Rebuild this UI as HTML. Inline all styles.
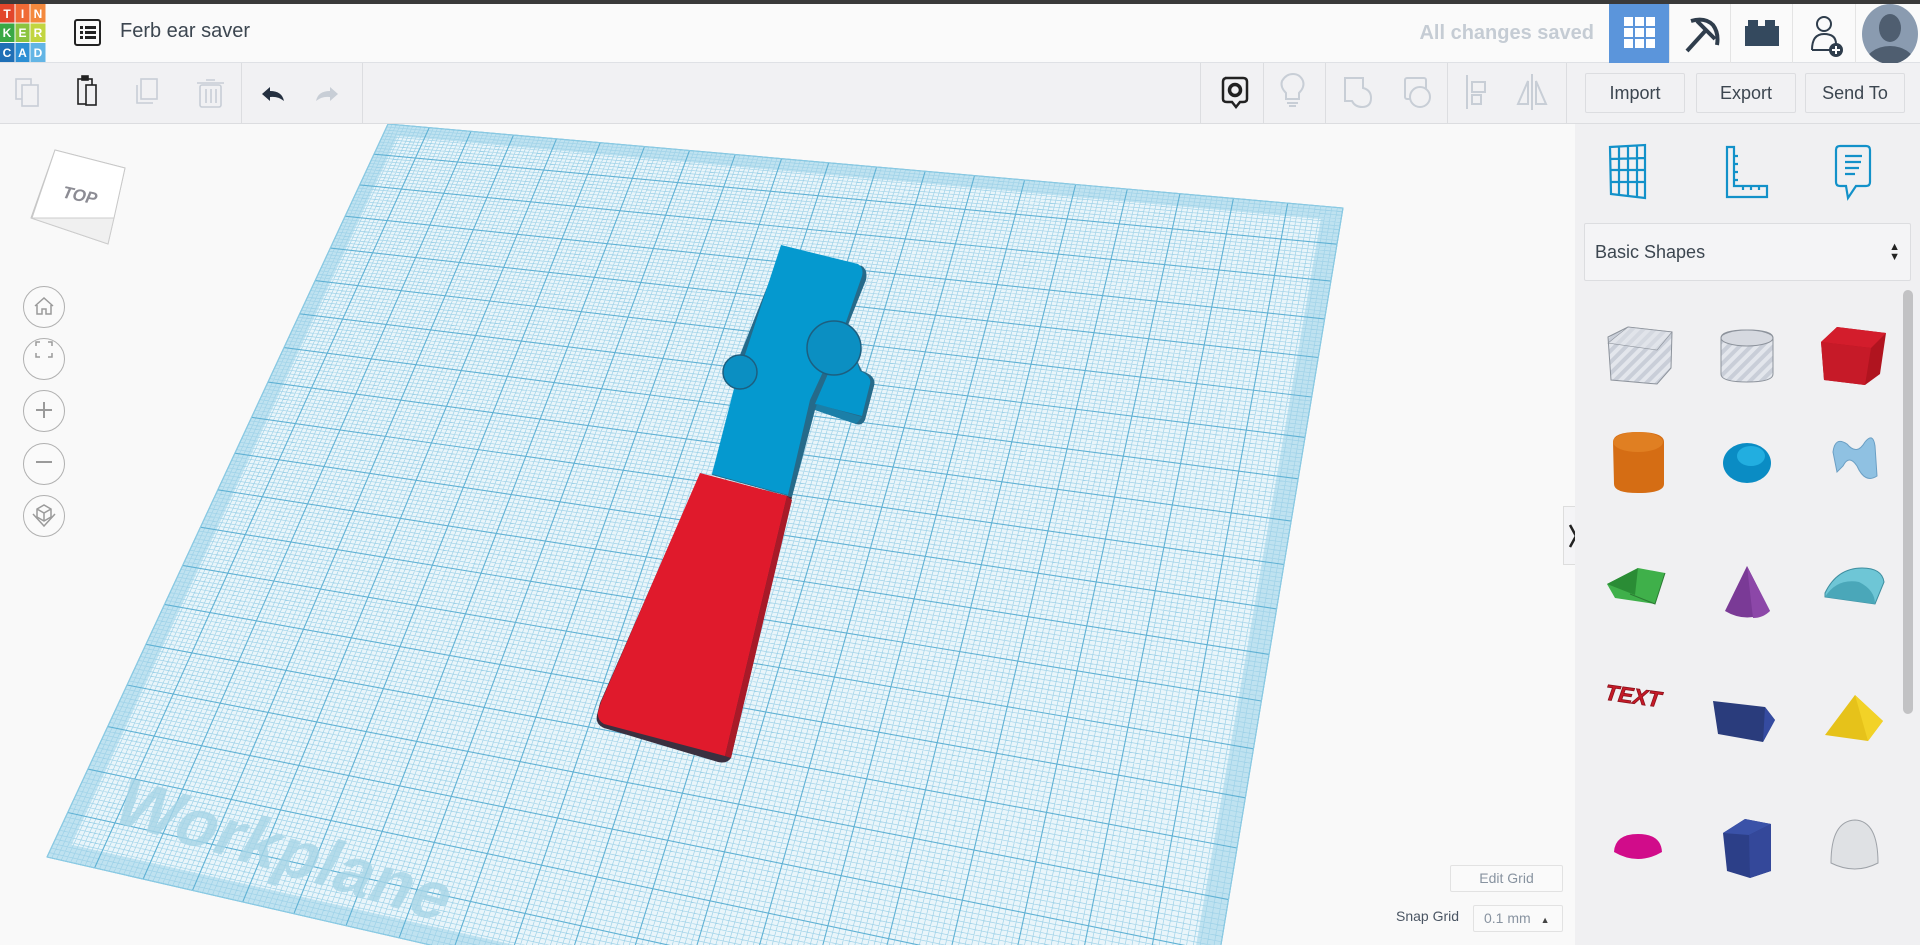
<!DOCTYPE html>
<html style="overflow:hidden"><head><meta charset="utf-8"><style>
*{box-sizing:border-box;margin:0;padding:0}
body{width:1920px;height:945px;overflow:hidden;background:#f9f9f9;font-family:"Liberation Sans",sans-serif;position:relative}
.abs{position:absolute}
#topline{left:0;top:0;width:1920px;height:4px;background:#3a3a3a}
#topbar{left:0;top:4px;width:1920px;height:59px;background:#fafafa;border-bottom:1px solid #dfe1e5}
#toolbar{left:0;top:63px;width:1920px;height:61px;background:#f1f1f3;border-bottom:1px solid #dcdde0}
.sep{position:absolute;top:0;width:1px;height:60px;background:#dcdde0}
.btn{position:absolute;top:10px;height:40px;border:1px solid #dcdde0;border-radius:2px;background:#f1f1f3;font-size:18px;color:#3c4650;text-align:center;line-height:38px}
#panel{left:1575px;top:124px;width:345px;height:821px;background:#f0f0f2;overflow:hidden}
.nav{position:absolute;left:23px;width:42px;height:42px;border:1.2px solid #b0b0b0;border-radius:50%;background:#fafafa}
</style></head><body>
<div class="abs" id="topline"></div>
<div class="abs" id="topbar">
 <svg class="abs" style="left:0;top:0" width="46" height="58">
  <rect x="0" y="0" width="14.5" height="18.5" fill="#e2462b"/><rect x="15.5" y="0" width="14" height="18.5" fill="#f06a35"/><rect x="30.5" y="0" width="15" height="18.5" fill="#f4893d"/>
  <rect x="0" y="19.5" width="14.5" height="18.5" fill="#3aa845"/><rect x="15.5" y="19.5" width="14" height="18.5" fill="#8cc43f"/><rect x="30.5" y="19.5" width="15" height="18.5" fill="#c2d540"/>
  <rect x="0" y="39" width="14.5" height="19" fill="#1f6fb6"/><rect x="15.5" y="39" width="14" height="19" fill="#2c8fd4"/><rect x="30.5" y="39" width="15" height="19" fill="#63b5e5"/>
  <g font-family="Liberation Sans" font-size="12" font-weight="bold" fill="#fff" text-anchor="middle">
  <text x="7" y="14">T</text><text x="22.5" y="14">I</text><text x="38" y="14">N</text>
  <text x="7" y="33">K</text><text x="22.5" y="33">E</text><text x="38" y="33">R</text>
  <text x="7" y="53">C</text><text x="22.5" y="53">A</text><text x="38" y="53">D</text></g>
 </svg>
 <svg class="abs" style="left:73px;top:14px" width="30" height="30"><rect x="2" y="2" width="25" height="25" rx="2" fill="none" stroke="#222" stroke-width="2"/><g fill="#222"><rect x="7" y="8" width="3" height="3"/><rect x="12" y="8" width="11" height="3"/><rect x="7" y="13" width="3" height="3"/><rect x="12" y="13" width="11" height="3"/><rect x="7" y="18" width="3" height="3"/><rect x="12" y="18" width="11" height="3"/></g></svg>
 <div class="abs" style="left:120px;top:16px;font-size:20px;color:#3c4650">Ferb ear saver</div>
 <div class="abs" style="left:1400px;width:194px;text-align:right;top:18px;font-size:20px;font-weight:bold;color:#c5ccd4">All changes saved</div>
 <div class="abs" style="left:1609px;top:0;width:60px;height:59px;background:#5b95db"></div>
 <svg class="abs" style="left:1624px;top:13px" width="32" height="32"><g fill="#fff"><rect x="0" y="0" width="9" height="9"/><rect x="11" y="0" width="9" height="9"/><rect x="22" y="0" width="9" height="9"/><rect x="0" y="11" width="9" height="9"/><rect x="11" y="11" width="9" height="9"/><rect x="22" y="11" width="9" height="9"/><rect x="0" y="22" width="9" height="9"/><rect x="11" y="22" width="9" height="9"/><rect x="22" y="22" width="9" height="9"/></g></svg>
 <div class="abs" style="left:1669px;top:0;width:1px;height:59px;background:#e4e4e4"></div>
 <svg class="abs" style="left:1683px;top:11px" width="40" height="40"><path d="M4 36 L24 14" stroke="#2f3d4c" stroke-width="4" fill="none"/><path d="M8 6 Q22 2 30 10 Q36 18 34 30" stroke="#2f3d4c" stroke-width="4" fill="none"/><path d="M14 6 L32 24" stroke="#2f3d4c" stroke-width="4"/></svg>
 <div class="abs" style="left:1730px;top:0;width:1px;height:59px;background:#e4e4e4"></div>
 <svg class="abs" style="left:1745px;top:16px" width="34" height="26"><rect x="0" y="6" width="34" height="20" fill="#34495e"/><rect x="3" y="0" width="10" height="8" fill="#34495e"/><rect x="20" y="0" width="10" height="8" fill="#34495e"/></svg>
 <div class="abs" style="left:1792px;top:0;width:1px;height:59px;background:#e4e4e4"></div>
 <svg class="abs" style="left:1810px;top:10px" width="34" height="44"><circle cx="14" cy="10" r="7" fill="none" stroke="#2f3d4c" stroke-width="2"/><path d="M2 36 Q2 20 14 20 Q26 20 26 30 M2 36 L20 36" fill="none" stroke="#2f3d4c" stroke-width="2"/><circle cx="26" cy="36" r="7" fill="#2f3d4c"/><path d="M26 32 V40 M22 36 H30" stroke="#fff" stroke-width="2"/></svg>
 <div class="abs" style="left:1855px;top:0;width:1px;height:59px;background:#e4e4e4"></div>
 <svg class="abs" style="left:1860px;top:0" width="60" height="60"><defs><clipPath id="av"><ellipse cx="30" cy="30" rx="28" ry="30"/></clipPath></defs><ellipse cx="30" cy="30" rx="28" ry="30" fill="#8a9bb0"/><g clip-path="url(#av)" fill="#4f5e70"><ellipse cx="30" cy="24" rx="11" ry="14"/><ellipse cx="30" cy="62" rx="26" ry="20"/></g></svg>
</div>

<div class="abs" id="toolbar">
 <svg class="abs" style="left:0;top:0" width="370" height="60" fill="none" stroke-width="1.6">
  <g stroke="#c8ced6"><rect x="16" y="16" width="15" height="20"/><rect x="22" y="22" width="16" height="21" fill="#f1f1f3"/></g>
  <g stroke="#222"><rect x="78" y="16" width="14" height="25"/><rect x="86" y="22" width="10" height="20" fill="#f1f1f3"/><rect x="82" y="13" width="6" height="4" fill="#222"/></g>
  <g stroke="#c8ced6"><path d="M137 22 V40 H153"/><rect x="141" y="16" width="16" height="20"/></g>
  <g stroke="#c8ced6"><rect x="200" y="22" width="21" height="22" rx="2"/><path d="M197 20 H224 M206 17 H215 M206 26 V40 M211 26 V40 M216 26 V40"/></g>
  <path d="M262 31 L270 24 V28 Q282 28 284 38 Q278 33 270 34 V38 Z" fill="#253040" stroke="none"/>
  <path d="M338 31 L330 24 V28 Q318 28 316 38 Q322 33 330 34 V38 Z" fill="#c8ced6" stroke="none"/>
 </svg>
 <div class="sep" style="left:241px"></div><div class="sep" style="left:362px"></div>
 <div class="sep" style="left:1200px"></div><div class="sep" style="left:1263px"></div><div class="sep" style="left:1325px"></div><div class="sep" style="left:1447px"></div><div class="sep" style="left:1566px"></div>
 <svg class="abs" style="left:1200px;top:0" width="370" height="60" fill="none" stroke-width="2">
  <path d="M25 15 H43 Q47 15 47 19 V36 Q47 39 43 39 H40 L36 44 L32 39 H27 Q23 39 23 36 V19 Q23 15 27 15Z" stroke="#222" stroke-width="2.5"/>
  <circle cx="35" cy="27" r="5.5" stroke="#222" stroke-width="3.5"/>
  <g stroke="#c8ced6"><path d="M86 30 Q80 24 82 18 Q86 11 93 11 Q100 11 103 18 Q105 24 99 30 V36 H86 Z M87 40 H98 M89 43 H96"/>
  <path d="M145 15 H163 V25 Q171 27 171 35 Q171 44 162 44 Q155 44 152 38 H145 Z"/>
  <rect x="205" y="15" width="21" height="21" rx="2"/><circle cx="220" cy="34" r="10" fill="#f1f1f3"/>
  <path d="M267 12 V46 M272 19 H285 V29 H272 Z M272 32 H281 V41 H272 Z"/>
  <path d="M332 11 V47 M328 18 L318 41 H328 Z M336 18 L346 41 H336 Z"/></g>
 </svg>
 <div class="btn" style="left:1585px;width:100px">Import</div>
 <div class="btn" style="left:1696px;width:100px">Export</div>
 <div class="btn" style="left:1805px;width:100px">Send To</div>
</div>

<svg class="abs" style="left:0;top:124px" width="1575" height="821" id="scene">
 <g transform="translate(0,-124)">
  <g id="wp"></g>
  <text x="0" y="0" font-family="Liberation Sans" font-weight="bold" font-size="68" fill="#a6d4e6" fill-opacity="0.8" transform="translate(108,820) rotate(17) skewX(-12)">Workplane</text>
  <!-- blue part -->
  <path d="M783 247 L862 266 Q868 270 866 280 L848 325 L842 330 L862 371 Q877 376 874 386 L865 420 Q862 426 856 424 L815 410 L792 497 L712 475 L737 382 L738 360 L783 247 Z" fill="#256a8a"/>
  <path d="M781 245 L858 264 Q864 268 862 276 L846 322 L810 400 L788 495 L712 474 L736 381 L740 370 Z" fill="#0599cf"/>
  <path d="M846 332 L860 371 Q872 376 870 384 L862 416 L815 404 Z" fill="#0596cc"/>
  <path d="M817 404 L862 417 L856 424 L815 410 Z" fill="#1b7fa8"/>
  <circle cx="834" cy="348" r="27" fill="#0b8fc2" stroke="#1d5f80" stroke-width="1.5"/>
  <circle cx="740" cy="372" r="17" fill="#0b8fc2" stroke="#1d5f80" stroke-width="1.5"/>
  <!-- red part -->
  <path d="M700 474 L792 497 L731 758 Q727 764 718 762 L604 728 Q595 724 597 715 L600 703 Z" fill="#3a3040"/>
  <path d="M700 473 L787 496 L725 756 L604 724 Q597 720 598 712 L601 702 Z" fill="#e01a2c"/>
  <path d="M787 496 L792 500 L731 758 L725 756 Z" fill="#a81a28"/>
 </g>
</svg>

<!-- view cube -->
<svg class="abs" style="left:25px;top:148px" width="105" height="105">
 <path d="M30 2 L100 20 L83 96 L6 70 Z" fill="#f4f4f4" stroke="#c4c4c4"/>
 <path d="M30 2 L100 20 L89 70 L7 70 Z" fill="#fff" stroke="#c8c8c8"/>
 <path d="M7 70 L89 70 L83 96 L6 70" fill="#f0f0f0" stroke="#ccc"/>
 <text x="38" y="52" font-family="Liberation Sans" font-weight="bold" font-style="italic" font-size="17" fill="#8c8c94" transform="rotate(12 50 45)">TOP</text>
</svg>
<div class="nav" style="top:286px"></div><div class="nav" style="top:338px"></div><div class="nav" style="top:390px"></div><div class="nav" style="top:443px"></div><div class="nav" style="top:495px"></div>
<svg class="abs" style="left:23px;top:286px" width="42" height="252" fill="none" stroke="#9a9a9a" stroke-width="1.5">
 <path d="M12 20 L21 12 L30 20 M14 19 V28 H19 V23 H23 V28 H28 V19"/>
 <path d="M13 60 V56 H17 M25 56 H29 V60 M13 67 V71 H17 M25 71 H29 V67"/>
 <path d="M21 116 V132 M13 124 H29" stroke-width="2"/>
 <path d="M13 176 H29" stroke-width="2"/>
 <path d="M14 223 L21 219 L28 223 V231 L21 235 L14 231 Z M14 223 L21 227 L28 223 M21 227 V235 M10 228 L21 240 L32 228"/>
</svg>

<!-- collapse tab & grid controls -->
<div class="abs" style="left:1563px;top:506px;width:20px;height:59px;background:#f4f4f6;border:1px solid #ddd;border-right:none"></div>
<svg class="abs" style="left:1566px;top:522px" width="14" height="28"><path d="M4 3 L10 14 L4 25" fill="none" stroke="#222" stroke-width="2.5"/></svg>
<div class="abs" style="left:1450px;top:865px;width:113px;height:27px;border:1px solid #e2e2e2;border-radius:2px;background:#fafafa;text-align:center;font-size:14px;line-height:25px;color:#8893a0">Edit Grid</div>
<div class="abs" style="left:1396px;top:908px;font-size:14px;color:#4a5563">Snap Grid</div>
<div class="abs" style="left:1473px;top:905px;width:90px;height:27px;border:1px solid #e2e2e2;border-radius:2px;background:#fafafa;font-size:14px;line-height:25px;color:#8893a0;padding-left:10px">0.1 mm <span style="font-size:9px;margin-left:6px;color:#444">▲</span></div>

<div class="abs" id="panel">
 <svg class="abs" style="left:32px;top:18px" width="300" height="64" fill="none" stroke="#1291c9" stroke-width="2.2">
  <path d="M3 5 L38 3 V56 L4 52 Z M3 17 L38 16 M3 28 L38 28 M3 40 L38 40 M12 5 V53 M21 4 V54 M30 4 V55"/>
  <path d="M120 5 H127 V44 H160 V55 H120 Z M127 14 H131 M127 22 H131 M127 30 H131 M127 38 H131 M136 44 V48 M144 44 V48 M152 44 V48"/>
  <path d="M233 4 H259 Q263 4 263 8 V40 Q263 44 259 44 H249 L241 56 L239 44 H233 Q229 44 229 40 V8 Q229 4 233 4Z M238 14 H255 M238 20 H254 M238 26 H252 M238 32 H248"/>
 </svg>
 <div class="abs" style="left:9px;top:99px;width:327px;height:58px;background:#f4f4f6;border:1px solid #dcdde0;border-radius:2px;font-size:18px;color:#3c4650;line-height:56px;padding-left:10px">Basic Shapes<span style="position:absolute;right:10px;top:0;font-size:11px;line-height:10px;padding-top:18px;color:#222">▲<br>▼</span></div>
 <div class="abs" style="left:328px;top:166px;width:10px;height:424px;background:#c2c2c4;border-radius:5px"></div>
 <svg class="abs" style="left:0;top:166px" width="325" height="655">
  <defs><pattern id="st" width="8" height="8" patternUnits="userSpaceOnUse" patternTransform="rotate(45)"><rect width="8" height="8" fill="#c9ced8"/><rect width="4" height="8" fill="#e3e6ec"/></pattern></defs>
  <g transform="translate(0,20)">
  <path d="M33 27 L53 17 L97 22 L96 58 L82 74 L36 70 Z" fill="url(#st)" stroke="#8d939c"/>
  <path d="M53 17 L97 22 L82 40 L33 33Z" fill="#dfe2e8" fill-opacity=".5" stroke="#8d939c" stroke-width=".6"/>
  <path d="M146 28 Q146 20 172 20 Q198 20 198 28 V64 Q198 72 172 72 Q146 72 146 64 Z" fill="url(#st)" stroke="#8d939c"/>
  <ellipse cx="172" cy="28" rx="26" ry="8" fill="#d6d9e0" stroke="#8d939c"/>
  <path d="M246 32 L262 17 L311 23 L305 64 L290 75 L249 70 Z" fill="#b0141f"/>
  <path d="M246 32 L262 17 L311 23 L296 38 Z" fill="#d31d2c"/><path d="M246 32 L296 38 L290 75 L249 70 Z" fill="#c61a28"/>
  </g>
  <g transform="translate(0,36)">
  <path d="M38 116 Q38 106 63 106 Q89 106 89 116 V158 Q89 167 63 167 Q39 167 39 158 Z" fill="#d56d14"/>
  <ellipse cx="63" cy="116" rx="25" ry="10" fill="#e07f22"/>
  <ellipse cx="172" cy="137" rx="24" ry="20" fill="#0a8cc4"/><ellipse cx="176" cy="130" rx="14" ry="10" fill="#22aee0"/>
  <path d="M258 126 Q260 110 272 118 Q282 130 290 116 Q298 106 300 120 L302 150 Q290 158 282 140 Q274 128 268 140 L262 146 Z" fill="#8fc1e2" stroke="#6b9fc4"/>
  </g>
  <g transform="translate(0,78)">
  <path d="M32 216 L63 200 L90 205 L80 236 L40 230 Z" fill="#3fb04a"/><path d="M32 216 L63 200 L60 227 Z" fill="#2a8c35"/><path d="M55 226 L80 236 L90 205" fill="none" stroke="#2b7a33"/>
  <path d="M172 198 L150 243 Q172 256 195 243 Z" fill="#7a3a96"/><path d="M172 198 L178 250 Q188 250 195 243 Z" fill="#8c47a8"/>
  <path d="M250 225 Q262 200 287 200 Q307 200 309 214 L300 236 L250 229 Z" fill="#6ec6d6" stroke="#3e8ea0"/><path d="M250 229 Q262 210 284 214 Q300 222 300 236 Z" fill="#4aa7b9"/>
  </g>
  <g transform="translate(0,81)">
  <text x="30" y="333" font-family="Liberation Sans" font-weight="bold" font-style="italic" font-size="22" fill="#c61a28" transform="rotate(8 62 325)" stroke="#8a101a" stroke-width=".8">TEXT</text>
  <path d="M138 330 L190 336 L200 349 L188 371 L143 363 Z" fill="#2a3c7c"/><path d="M190 336 L200 349 L188 371 Z" fill="#354ba0"/>
  <path d="M280 324 L250 364 L293 370 L308 350 Z" fill="#e6c21a"/><path d="M280 324 L293 370 L308 350 Z" fill="#f2d227"/>
  </g>
  <g transform="translate(0,111)">
  <path d="M39 451 Q40 433 63 433 Q86 433 87 451 Q63 465 39 451 Z" fill="#d10c8a"/>
  <path d="M148 432 L170 418 L196 423 L196 470 L175 477 L152 470 Z" fill="#2c3f88"/><path d="M148 432 L170 418 L196 423 L174 434 Z" fill="#3a52a8"/><path d="M174 434 L196 423 V470 L175 477 Z" fill="#34489a"/>
  <path d="M256 462 Q256 420 280 419 Q303 420 303 462 Q280 474 256 462 Z" fill="#dfe1e4" stroke="#9ea2a8"/>
  </g>
 </svg>
</div>

<script>
(function(){
 var P=[[388,124],[1343,208],[1192,1120],[47,857]];
 var x0=P[0][0],y0=P[0][1],x1=P[1][0],y1=P[1][1],x2=P[2][0],y2=P[2][1],x3=P[3][0],y3=P[3][1];
 var dx1=x1-x2,dx2=x3-x2,dy1=y1-y2,dy2=y3-y2,sx=x0-x1+x2-x3,sy=y0-y1+y2-y3;
 var den=dx1*dy2-dx2*dy1;
 var g=(sx*dy2-dx2*sy)/den,h=(dx1*sy-sx*dy1)/den;
 var a=x1-x0+g*x1,b=x3-x0+h*x3,c=x0,d=y1-y0+g*y1,e=y3-y0+h*y3,f=y0;
 function M(u,v){var w=g*u+h*v+1;return [(a*u+b*v+c)/w,(d*u+e*v+f)/w];}
 var G=document.getElementById('wp'),s='';
 function poly(u0,v0,u1,v1){var p=[M(u0,v0),M(u1,v0),M(u1,v1),M(u0,v1)];return p.map(function(q){return q[0].toFixed(1)+','+q[1].toFixed(1)}).join(' ');}
 s+='<polygon points="'+poly(0,0,1,1)+'" fill="#bfe2f0"/>';
 var m=0.018;
 s+='<polygon points="'+poly(m,m,1-m,1-m)+'" fill="#e9f5fa"/>';
 var N=200,minor='',major='';
 for(var i=0;i<=N;i++){var t=i/N;var A=M(t,0),B=M(t,1),C=M(0,t),D=M(1,t);
  var l1='M'+A[0].toFixed(1)+' '+A[1].toFixed(1)+'L'+B[0].toFixed(1)+' '+B[1].toFixed(1);
  var l2='M'+C[0].toFixed(1)+' '+C[1].toFixed(1)+'L'+D[0].toFixed(1)+' '+D[1].toFixed(1);
  if(i%10==0){major+=l1+l2;}else{minor+=l1+l2;}}
 s+='<path d="'+minor+'" stroke="#9fd2e8" stroke-width="0.7" fill="none"/>';
 s+='<path d="'+major+'" stroke="#5fb1d4" stroke-width="1.1" fill="none"/>';
 s+='<polygon points="'+poly(0,0,1,1)+'" fill="none" stroke="#8ccbe4" stroke-width="1"/>';
 G.innerHTML=s;
})();
</script>
</body></html>
